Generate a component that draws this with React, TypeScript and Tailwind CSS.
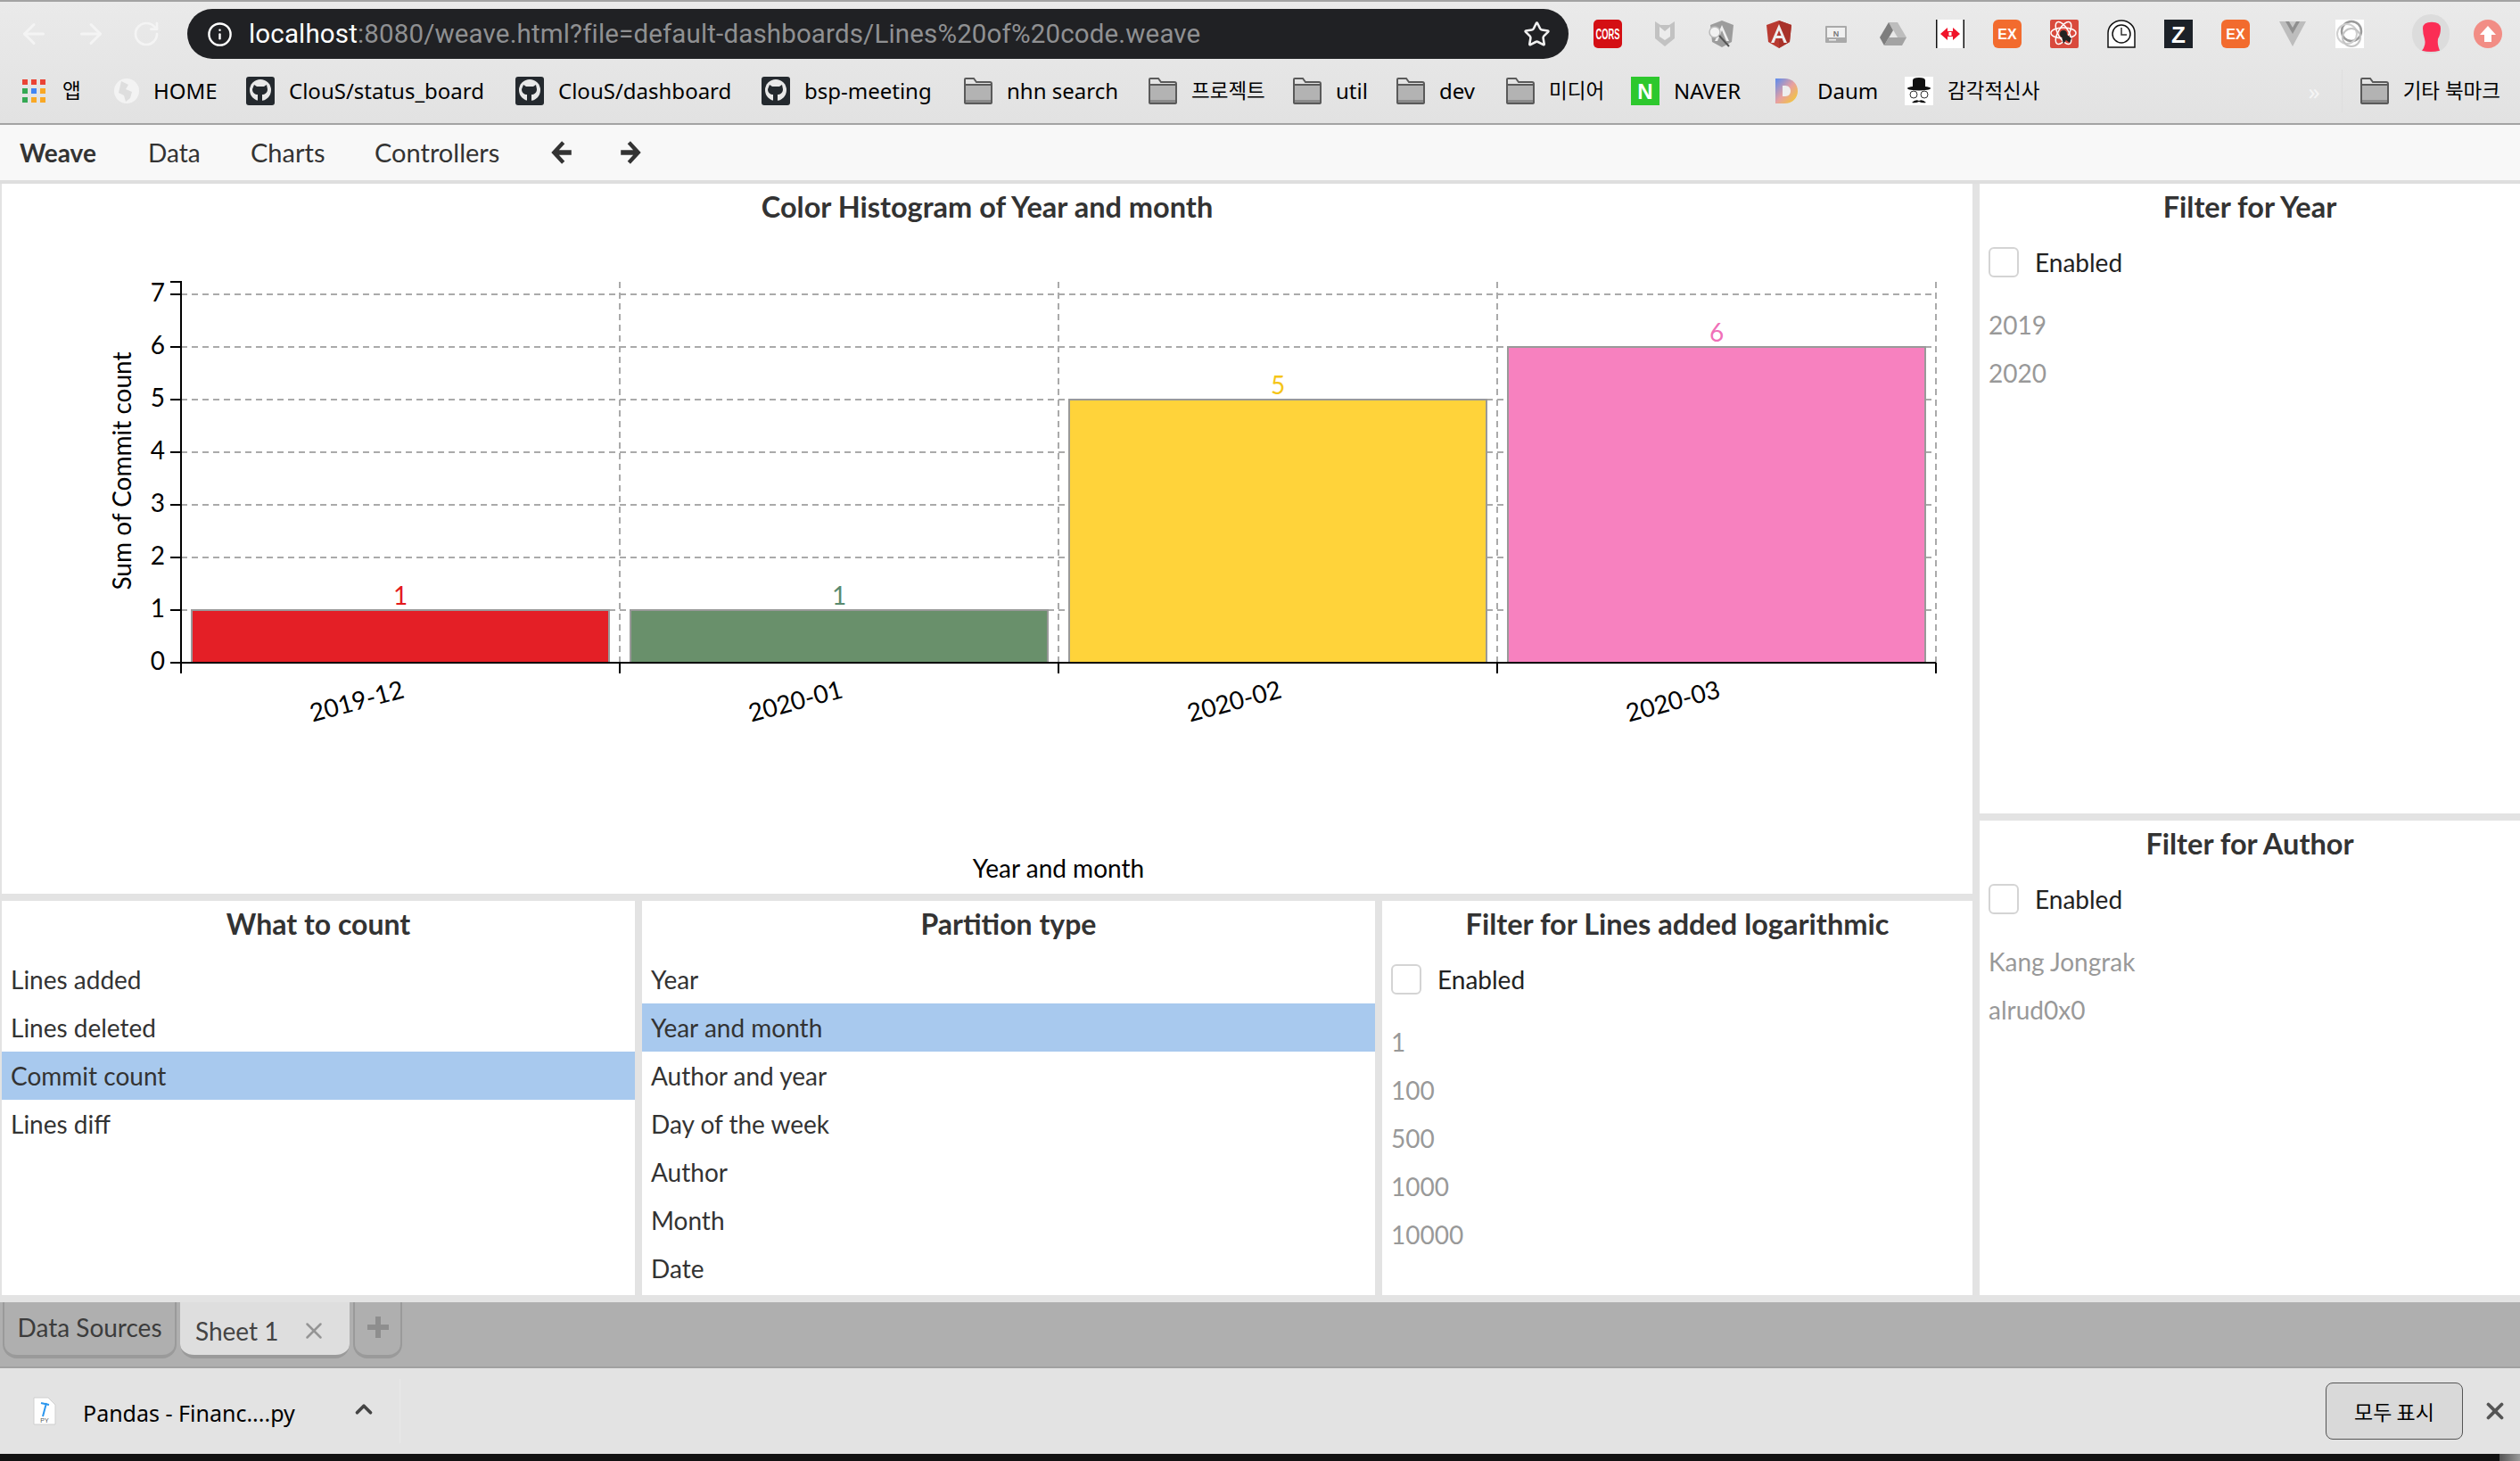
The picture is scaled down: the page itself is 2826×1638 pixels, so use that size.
import React from "react";
import { ArrowLeft, ArrowRight, RotateCw, Star, Info, X, ChevronUp } from "lucide-react";

const Github = () => (
  <svg width="32" height="32" viewBox="0 0 32 32" className="shrink-0">
    <rect width="32" height="32" rx="3" fill="#24292e" />
    <circle cx="16" cy="15" r="12" fill="#e8e8e8" />
    <path d="M9 9l3 2h8l3-2 1 5c0 4-3 6-6 6v7h-5v-7c-3 0-6-2-6-6z" fill="#24292e" />
  </svg>
);
const Folder = () => (
  <svg width="32" height="32" viewBox="0 0 32 32" className="shrink-0">
    <path d="M1 8V3q0-1 1-1h9l3 4h15q2 0 2 2v21q0 1-2 1H3q-2 0-2-1z" fill="#e4e4e4" stroke="#5a5a5a" strokeWidth="2" />
    <rect x="2" y="9" width="28" height="18" fill="#b3b3b3" />
    <line x1="2" y1="9" x2="30" y2="9" stroke="#5a5a5a" strokeWidth="2" />
    <rect x="2" y="26" width="28" height="3" fill="#8a8a8a" />
  </svg>
);
const Apps = () => (
  <svg width="28" height="28" viewBox="0 0 28 28" className="shrink-0">
    {["#ea4335", "#ea4335", "#ea4335", "#34a853", "#4285f4", "#f9a825", "#34a853", "#f9a825", "#f9a825"].map((c, i) => (
      <rect key={i} x={(i % 3) * 10 + 1} y={Math.floor(i / 3) * 10 + 1} width="6" height="6" fill={c} />
    ))}
  </svg>
);
const Globe = () => (
  <svg width="28" height="32" viewBox="0 0 28 32" className="shrink-0">
    <circle cx="14" cy="16" r="14" fill="#f3f3f3" />
    <path d="M8 5l8 4-3 5 7 3-2 7-5 4-2-7-6-3z" fill="#dedede" />
  </svg>
);
const Naver = () => (
  <svg width="32" height="32" viewBox="0 0 32 32" className="shrink-0">
    <rect width="32" height="32" fill="#2dc82d" />
    <text x="16" y="25" textAnchor="middle" fontSize="24" fontWeight="700" fill="#fff" fontFamily="Liberation Sans">N</text>
  </svg>
);
const Daum = () => (
  <svg width="26" height="32" viewBox="0 0 26 32" className="shrink-0">
    <defs>
      <linearGradient id="dg" x1="0" y1="0" x2="1" y2="1">
        <stop offset="0" stopColor="#5a8cf0" />
        <stop offset="0.5" stopColor="#e8a0a0" />
        <stop offset="1" stopColor="#f4d020" />
      </linearGradient>
    </defs>
    <path d="M0 2h10c9 0 15 6 15 14s-6 14-15 14H0z" fill="url(#dg)" />
    <path d="M8 10h3c4 0 6 3 6 6s-2 6-6 6H8z" fill="#eee" />
  </svg>
);
const Hat = () => (
  <svg width="32" height="32" viewBox="0 0 32 32" className="shrink-0">
    <rect width="32" height="32" fill="#fff" />
    <path d="M9 13V4q0-3 7-3t7 3v9z" fill="#111" />
    <ellipse cx="16" cy="13" rx="13" ry="2.5" fill="#111" />
    <circle cx="10" cy="20" r="4" fill="none" stroke="#333" strokeWidth="1" />
    <circle cx="22" cy="20" r="4" fill="none" stroke="#333" strokeWidth="1" />
    <path d="M8 29q4-4 8-2 4-2 8 2-4 1-8-1-4 2-8 1z" fill="#111" />
  </svg>
);

const bookmarks: { icon: React.ReactNode; label: string; w: number; gap?: number; ko?: boolean }[] = [
  { icon: <Globe />, label: "HOME", w: 70 },
  { icon: <Github />, label: "ClouS/status_board", w: 220 },
  { icon: <Github />, label: "ClouS/dashboard", w: 194 },
  { icon: <Github />, label: "bsp-meeting", w: 145 },
  { icon: <Folder />, label: "nhn search", w: 125 },
  { icon: <Folder />, label: "프로젝트", w: 80, ko: true },
  { icon: <Folder />, label: "util", w: 34 },
  { icon: <Folder />, label: "dev", w: 41 },
  { icon: <Folder />, label: "미디어", w: 58, ko: true },
  { icon: <Naver />, label: "NAVER", w: 80 },
  { icon: <Daum />, label: "Daum", w: 64, gap: 21 },
  { icon: <Hat />, label: "감각적신사", w: 104, ko: true },
];

const S = ({ children }: { children: React.ReactNode }) => (
  <svg width="32" height="32" viewBox="0 0 32 32" className="shrink-0">
    {children}
  </svg>
);

const extIcons: React.ReactNode[] = [
  <S key="cors">
    <rect width="32" height="32" rx="5" fill="#d40f14" />
    <text x="16" y="22" textAnchor="middle" fontSize="17" fontWeight="700" fill="#fff" fontFamily="Liberation Sans" textLength="27" lengthAdjust="spacingAndGlyphs">CORS</text>
  </S>,
  <S key="m">
    <path d="M5 2l6 4h10l6-4v19l-11 9-11-9z" fill="#c2c2c2" />
    <path d="M10 8l6 5 6-5v11l-6 4-6-4z" fill="#ececec" />
  </S>,
  <S key="aug">
    <path d="M16 1l13 5-2 19-11 6-11-6-2-19z" fill="#9c9c9c" />
    <path d="M16 6l8 18h-3l-5-12-5 12H8z" fill="#eee" />
    <circle cx="8" cy="14" r="6" fill="#f2f2f2" stroke="#bbb" strokeWidth="1.5" />
    <line x1="13" y1="18" x2="24" y2="30" stroke="#555" strokeWidth="2" />
  </S>,
  <S key="ng">
    <path d="M16 1l14 5-2 19-12 7-12-7-2-19z" fill="#b93a31" />
    <path d="M16 1l14 5-2 19-12 7z" fill="#a8322a" />
    <path d="M16 5l9 21h-3.5l-2-5h-7l-2 5H7zM16 12l-2.5 6h5z" fill="#eee" fillRule="evenodd" />
  </S>,
  <S key="n">
    <rect x="4" y="7" width="24" height="19" rx="1" fill="#a9a9a9" />
    <rect x="6" y="9" width="20" height="11" fill="#f0f0f0" />
    <text x="16" y="19" textAnchor="middle" fontSize="9" fontWeight="700" fill="#777" fontFamily="Liberation Sans">N</text>
    <rect x="8" y="22" width="8" height="1.5" fill="#eee" />
  </S>,
  <S key="drive">
    <path d="M11 3h10l10 17h-10z" fill="#bdbdbd" />
    <path d="M11 3L1 20l5 9 10-17z" fill="#7d7d7d" />
    <path d="M6 29h20l5-9H11z" fill="#a3a3a3" />
  </S>,
  <S key="arrows">
    <rect width="32" height="32" fill="#fff" />
    <rect x="0" y="0" width="1.5" height="32" fill="#111" />
    <rect x="30.5" y="0" width="1.5" height="32" fill="#111" />
    <path d="M13 9l-8 7 8 7v-4h6v4l8-7-8-7v4h-6z" fill="#f0142a" />
    <rect x="14.5" y="14" width="3" height="4" fill="#fff" />
  </S>,
  <S key="ex">
    <rect width="32" height="32" rx="6" fill="#f26b2e" />
    <text x="16" y="22" textAnchor="middle" fontSize="16" fontWeight="700" fill="#fff" fontFamily="Liberation Sans">EX</text>
  </S>,
  <S key="react">
    <rect width="32" height="32" rx="2" fill="#d94a3d" />
    <g fill="none" stroke="#fff" strokeWidth="1.5">
      <ellipse cx="15" cy="15" rx="14" ry="6" />
      <ellipse cx="15" cy="15" rx="14" ry="6" transform="rotate(60 15 15)" />
      <ellipse cx="15" cy="15" rx="14" ry="6" transform="rotate(120 15 15)" />
    </g>
    <circle cx="15" cy="16" r="4" fill="#222" />
    <path d="M13 19l5-3 6 5-2 5-4-3-3 4z" fill="#222" />
  </S>,
  <S key="clock">
    <path d="M1 31V15a15 14 0 0 1 30 0v16z" fill="#fff" stroke="#111" strokeWidth="1.5" />
    <circle cx="16" cy="16" r="10" fill="none" stroke="#111" strokeWidth="1.5" />
    <path d="M16 9v8h6" fill="none" stroke="#333" strokeWidth="1.5" />
  </S>,
  <S key="z">
    <rect width="32" height="32" fill="#1c2128" />
    <text x="16" y="26" textAnchor="middle" fontSize="26" fontWeight="700" fill="#fff" fontFamily="Liberation Sans">Z</text>
  </S>,
  <S key="ex2">
    <rect width="32" height="32" rx="6" fill="#f26b2e" />
    <text x="16" y="22" textAnchor="middle" fontSize="16" fontWeight="700" fill="#fff" fontFamily="Liberation Sans">EX</text>
  </S>,
  <S key="vue">
    <path d="M1 2h30L16 30z" fill="#bdbdbd" />
    <path d="M8 2h16l-8 14z" fill="#8f8f8f" />
    <path d="M12 2h8l-4 7z" fill="#c8c8c8" />
  </S>,
  <S key="ring">
    <rect width="32" height="32" fill="#fff" />
    <g fill="none">
      <circle cx="18" cy="13" r="11" stroke="#9a9a9a" strokeWidth="2.5" />
      <circle cx="13" cy="16" r="11" stroke="#cfcfcf" strokeWidth="2" />
      <circle cx="18" cy="20" r="10" stroke="#c4c4c4" strokeWidth="2" />
    </g>
  </S>,
];

const Title = ({ children, wide }: { children: React.ReactNode; wide?: boolean }) => (
  <div className={`h-[61px] pt-[8px] shrink-0 font-bold leading-[36px] text-[#333] text-center ${wide ? "text-[32.5px]" : "text-[32px]"}`}>{children}</div>
);

const ListPanel = ({ title, items, selected, w }: { title: string; items: string[]; selected: string; w: string }) => (
  <div className={`${w} bg-white flex flex-col overflow-hidden`}>
    <Title>{title}</Title>
    {items.map((it) => (
      <div
        key={it}
        className={`h-[54px] shrink-0 flex items-center px-[10px] text-[28px] text-[#333] ${it === selected ? "bg-[#a8c9ee]" : ""}`}
      >
        {it}
      </div>
    ))}
  </div>
);

const FilterBody = ({ items }: { items: string[] }) => (
  <>
    <div className="h-[54px] shrink-0 flex items-center gap-[18px] px-[10px] text-[28px] text-[#222]">
      <div className="w-[34px] h-[34px] rounded-[6px] border-2 border-[#d4d4d4] bg-white" />
      <span>Enabled</span>
    </div>
    <div className="mt-[16px] flex flex-col">
      {items.map((it) => (
        <div key={it} className="h-[54px] flex items-center px-[10px] text-[28px] text-[#999]">
          {it}
        </div>
      ))}
    </div>
  </>
);

const FilterPanel = ({ title, items, cls }: { title: string; items: string[]; cls: string }) => (
  <div className={`${cls} bg-white flex flex-col overflow-hidden`}>
    <Title wide>{title}</Title>
    <FilterBody items={items} />
  </div>
);

const bars = [
  { x: 215, v: 1, c: "#e41f26", lc: "#e41a1c", label: "2019-12" },
  { x: 707, v: 1, c: "#69906b", lc: "#5a8a70", label: "2020-01" },
  { x: 1199, v: 5, c: "#ffd33a", lc: "#f5c518", label: "2020-02" },
  { x: 1691, v: 6, c: "#f781bf", lc: "#f070b8", label: "2020-03" },
];
const Y0 = 743;
const STEP = 59;

const Chart = () => (
  <svg width="2210" height="744" viewBox="2 258 2210 744" fontFamily="Lato" className="block">
    {[1, 2, 3, 4, 5, 6, 7].map((v) => (
      <line key={v} x1="203" x2="2171" y1={Y0 - v * STEP} y2={Y0 - v * STEP} stroke="#aaa" strokeWidth="2" strokeDasharray="7 5" />
    ))}
    {[695, 1187, 1679, 2171].map((x) => (
      <line key={x} x1={x} x2={x} y1="316" y2={Y0} stroke="#aaa" strokeWidth="2" strokeDasharray="7 5" />
    ))}
    {bars.map((b) => (
      <g key={b.x}>
        <rect x={b.x} y={Y0 - b.v * STEP} width="468" height={b.v * STEP} fill={b.c} stroke="#999" strokeWidth="2" />
        <text x={b.x + 234} y={Y0 - b.v * STEP - 6} textAnchor="middle" fontSize="28" fill={b.lc}>{b.v}</text>
        <text
          x={b.x + 185}
          y={796}
          textAnchor="middle"
          fontSize="28"
          fill="#000"
          transform={`rotate(-15 ${b.x + 185} 786)`}
        >
          {b.label}
        </text>
      </g>
    ))}
    <path d="M191 316H203V743" fill="none" stroke="#000" strokeWidth="2" />
    {[0, 1, 2, 3, 4, 5, 6, 7].map((v) => (
      <g key={v}>
        <line x1="191" x2="203" y1={Y0 - v * STEP} y2={Y0 - v * STEP} stroke="#000" strokeWidth="2" />
        <text x="185" y={Y0 - v * STEP + 8} textAnchor="end" fontSize="28" fill="#000">{v}</text>
      </g>
    ))}
    <line x1="203" x2="2171" y1={Y0} y2={Y0} stroke="#000" strokeWidth="2" />
    {[203, 695, 1187, 1679, 2171].map((x) => (
      <line key={x} x1={x} x2={x} y1={Y0} y2="755" stroke="#000" strokeWidth="2" />
    ))}
    <text x="1187" y="984" textAnchor="middle" fontSize="28" fill="#000">Year and month</text>
    <text x="147" y="528" textAnchor="middle" fontSize="28" fill="#000" transform="rotate(-90 147 528)">Sum of Commit count</text>
  </svg>
);

export default function App() {
  return (
    <div className="w-[2826px] h-[1638px] flex flex-col overflow-hidden font-['Lato',sans-serif]">
      {/* browser chrome */}
      <div className="h-[140px] shrink-0 flex flex-col bg-gradient-to-b from-[#eaeaea] to-[#e2e2e2] border-t-2 border-b-2 border-t-[#a3a3a3] border-b-[#a3a3a3] font-['Noto_Sans','Noto_Sans_CJK_KR',sans-serif]">
        <div className="h-[64px] pt-[8px] flex items-start shrink-0">
          <div className="w-[210px] h-[56px] flex items-center pl-[20px] gap-[28px] text-[#f4f4f4] shrink-0">
            <ArrowLeft size={36} strokeWidth={2} />
            <ArrowRight size={36} strokeWidth={2} />
            <RotateCw size={32} strokeWidth={2} />
          </div>
          <div className="w-[1549px] h-[56px] rounded-full bg-[#202124] flex items-center pl-[22px] pr-[20px] shrink-0 font-['Roboto',sans-serif] text-[29.5px] tracking-[0.15px] whitespace-nowrap">
            <Info size={29} color="#fff" strokeWidth={2} />
            <span className="ml-[18px] text-white">localhost</span>
            <span className="text-[#8f9092]">:8080/weave.html?file=default-dashboards/Lines%20of%20code.weave</span>
            <Star size={31} color="#f0f0f0" strokeWidth={2} className="ml-auto" />
          </div>
          <div className="ml-[28px] mt-[12px] flex gap-[32px] shrink-0">{extIcons}</div>
          <div className="ml-[54px] mt-[6px] pt-[8px] w-[42px] h-[44px] rounded-full bg-[#dcdcdc] flex justify-center shrink-0">
            <svg width="24" height="36" viewBox="0 0 24 46" preserveAspectRatio="none">
              <path d="M3 10q0-9 10-9t10 9q0 9-3 15-1 8 2 17-10 3-20 0 5-8 3-17Q3 18 3 10z" fill="#fb2d55" />
            </svg>
          </div>
          <div className="ml-[27px] mt-[12px] w-[32px] h-[32px] rounded-full bg-[#f28d85] flex items-center justify-center shrink-0">
            <svg width="20" height="20" viewBox="0 0 20 20">
              <path d="M10 1l9 10h-5v8H6v-8H1z" fill="#fff" />
            </svg>
          </div>
        </div>
        <div className="h-[72px] flex items-center pl-[24px] text-[24px] text-black">
          <Apps />
          <span className="ml-[18px] mr-[32px] w-[26px] shrink-0 text-[22.5px]">앱</span>
          {bookmarks.map((b) => (
            <div key={b.label} className="flex items-center gap-[16px] mr-[34px] shrink-0">
              <div style={b.gap ? { marginRight: b.gap - 16 } : undefined} className="flex">{b.icon}</div>
              <span className={`whitespace-nowrap ${b.ko ? "text-[22.5px]" : ""}`} style={{ width: b.w }}>{b.label}</span>
            </div>
          ))}
          <span className="ml-auto text-[#f5f5f5] text-[26px]">»</span>
          <div className="ml-[24px] w-px h-[48px] bg-[#dedede]" />
          <div className="ml-[20px] mr-[22px] flex items-center gap-[16px]">
            <Folder />
            <span className="whitespace-nowrap text-[22.5px]">기타 북마크</span>
          </div>
        </div>
      </div>
      {/* nav */}
      <div className="h-[66px] shrink-0 bg-[#f8f8f8] border-b-4 border-[#dedede] flex items-center text-[28px] text-[#333] pl-[22px]">
        <span className="font-bold w-[144px]">Weave</span>
        <span className="w-[115px]">Data</span>
        <span className="w-[139px] text-[29px]">Charts</span>
        <span className="w-[196px] text-[29px]">Controllers</span>
        <svg width="26" height="30" viewBox="0 0 24 28" className="mr-[53px]">
          <path d="M13 2L2 14l11 12 3-3-6-6.500h13v-5H10L16 5z" fill="#333" />
        </svg>
        <svg width="26" height="30" viewBox="0 0 24 28">
          <path d="M11 2l11 12-11 12-3-3 6-6.500H1v-5h13L8 5z" fill="#333" />
        </svg>
      </div>
      {/* main */}
      <div className="h-[1254px] shrink-0 bg-[#e3e3e3] pl-[2px] pb-[8px] flex gap-[8px]">
        <div className="w-[2210px] flex flex-col gap-[8px] shrink-0">
          <div className="h-[796px] bg-white flex flex-col shrink-0">
            <div className="h-[52px] pt-[8px] shrink-0 text-[32.5px] font-bold leading-[36px] text-[#333] text-center">Color Histogram of Year and month</div>
            <Chart />
          </div>
          <div className="h-[442px] flex gap-[8px] shrink-0">
            <ListPanel title="What to count" w="w-[710px]" selected="Commit count" items={["Lines added", "Lines deleted", "Commit count", "Lines diff"]} />
            <ListPanel title="Partition type" w="w-[822px]" selected="Year and month" items={["Year", "Year and month", "Author and year", "Day of the week", "Author", "Month", "Date"]} />
            <FilterPanel title="Filter for Lines added logarithmic" cls="w-[662px]" items={["1", "100", "500", "1000", "10000"]} />
          </div>
        </div>
        <div className="flex-1 flex flex-col gap-[8px]">
          <FilterPanel title="Filter for Year" cls="h-[706px] shrink-0" items={["2019", "2020"]} />
          <FilterPanel title="Filter for Author" cls="flex-1" items={["Kang Jongrak", "alrud0x0"]} />
        </div>
      </div>
      {/* tabs */}
      <div className="h-[74px] shrink-0 bg-[#afafaf] border-b-2 border-[#a0a0a0] flex items-start pl-[3px] gap-[4px] text-[#444]">
        <div className="w-[195px] h-[63px] rounded-b-[16px] border-x-2 border-b-4 border-[#9a9a9a] flex items-center justify-center text-[28px] text-[#3c3c3c] pb-[4px]">Data Sources</div>
        <div className="w-[190px] h-[63px] rounded-b-[16px] bg-[#dedede] border-b-4 border-[#9a9a9a] flex items-center pl-[17px] pt-[4px] text-[28px]">
          <span>Sheet 1</span>
          <X size={30} color="#959595" strokeWidth={2} className="ml-[24px]" />
        </div>
        <div className="w-[55px] h-[63px] rounded-b-[16px] border-x-2 border-b-4 border-[#9a9a9a] flex items-center justify-center pb-[4px]">
          <svg width="24" height="24" viewBox="0 0 24 24">
            <path d="M9 0h6v9h9v6h-9v9H9v-9H0V9h9z" fill="#8e8e8e" />
          </svg>
        </div>
      </div>
      {/* downloads */}
      <div className="h-[96px] shrink-0 bg-[#e3e3e3] flex items-center font-['Noto_Sans','Noto_Sans_CJK_KR',sans-serif] text-[25px] text-black">
        <svg width="26" height="32" viewBox="0 0 26 32" className="ml-[37px] shrink-0">
          <path d="M1 1h16l8 8v22H1z" fill="#fefefe" stroke="#cfcfcf" />
          <path d="M11 22L15 7M9 7l9 2" stroke="#2a96ee" strokeWidth="2" fill="none" />
          <text x="13" y="29" textAnchor="middle" fontSize="7" fill="#555" fontFamily="Liberation Sans">PY</text>
        </svg>
        <span className="ml-[30px] mt-[6px] w-[300px] whitespace-nowrap">Pandas - Financ....py</span>
        <ChevronUp size={30} color="#444" strokeWidth={3} className="mb-[4px]" />
        <div className="ml-[25px] w-px h-[72px] bg-[#e9e9e9]" />
        <div className="ml-auto w-[154px] h-[64px] rounded-[8px] border border-[#555] bg-[#d9d9d9] flex items-center justify-center text-[23px] font-['Noto_Sans_CJK_KR',sans-serif]">모두 표시</div>
        <X size={30} color="#555" strokeWidth={3} className="ml-[21px] mr-[13px]" />
      </div>
      <div className="flex-1 bg-[#111] flex justify-end">
        <div className="w-[23px] bg-gradient-to-r from-[#555] to-[#999]" />
      </div>
    </div>
  );
}
